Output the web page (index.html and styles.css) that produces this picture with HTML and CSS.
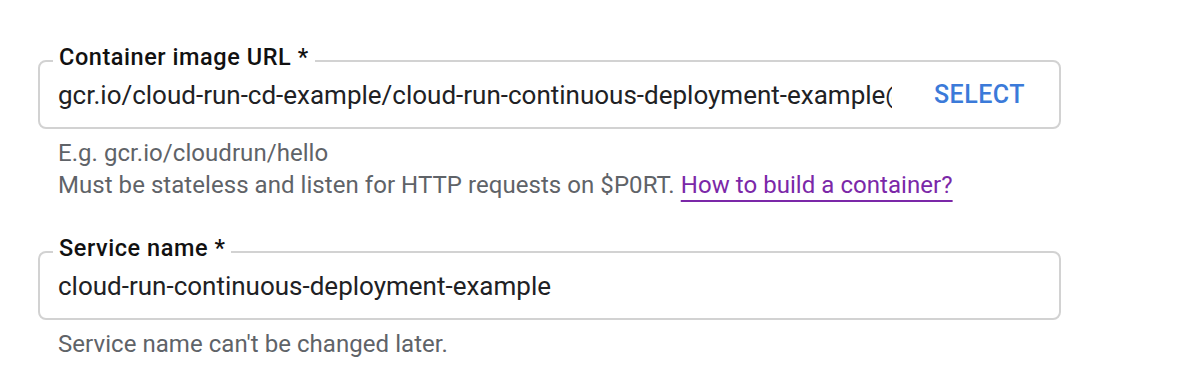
FILE: index.html
```html
<!DOCTYPE html>
<html lang="en">
<head>
  <meta charset="UTF-8" />
  <title>Create service</title>
  <link rel="stylesheet" href="styles.css">
</head>
<body>
  <div class="form">

    <!-- Container image -->
    <fieldset class="field">
      <legend>Container image URL *</legend>
      <div class="field-row">
        <div class="field-value">gcr.io/cloud-run-cd-example/cloud-run-continuous-deployment-example@sha256:4f1a</div>
        <button type="button" class="select-btn">SELECT</button>
      </div>
    </fieldset>
    <div class="hint">
      E.g. gcr.io/cloudrun/hello<br>
      Must be stateless and listen for HTTP requests on $P0RT. <a href="#" class="hint-link">How to build a container?</a>
    </div>

    <!-- Service name -->
    <fieldset class="field field-second">
      <legend>Service name *</legend>
      <div class="field-row">
        <div class="field-value">cloud-run-continuous-deployment-example</div>
      </div>
    </fieldset>
    <div class="hint">Service name can't be changed later.</div>

  </div>
</body>
</html>
```

FILE: styles.css
```css
html, body {
  margin: 0;
  padding: 0;
  background: #fff;
  font-family: Roboto, "Liberation Sans", Arial, sans-serif;
}

.form {
  width: 1023px;
  padding: 45px 0 0 38px;
}

.field {
  margin: 0;
  padding: 0 20px 15px 18px;
  border: 2px solid #d2d2d2;
  border-radius: 8px;
  min-width: 0;
}

.field legend {
  margin-left: -5px;
  padding: 0 6px 8px;
  font-size: 23.5px;
  line-height: 24px;
  font-weight: 500;
  letter-spacing: 0.55px;
  color: #111;
}

.field-row {
  display: flex;
  align-items: center;
  height: 35px;
}

.field-value {
  flex: 1;
  min-width: 0;
  overflow: hidden;
  white-space: nowrap;
  font-size: 26px;
  line-height: 34px;
  color: #202124;
}

.select-btn {
  margin-left: 42px;
  margin-right: 14px;
  padding: 0;
  border: none;
  background: none;
  font-family: inherit;
  font-size: 25px;
  font-weight: 500;
  letter-spacing: 0.5px;
  color: #3b7ad9;
  cursor: pointer;
}

.hint {
  margin-top: 8px;
  padding-left: 20px;
  font-size: 24px;
  line-height: 32px;
  letter-spacing: 0.05px;
  color: #5f6368;
}

.hint-link {
  color: #7b28a8;
  text-decoration: underline;
  text-decoration-thickness: 2px;
  text-underline-offset: 7px;
}

.field-second {
  margin-top: 35px;
}
```
